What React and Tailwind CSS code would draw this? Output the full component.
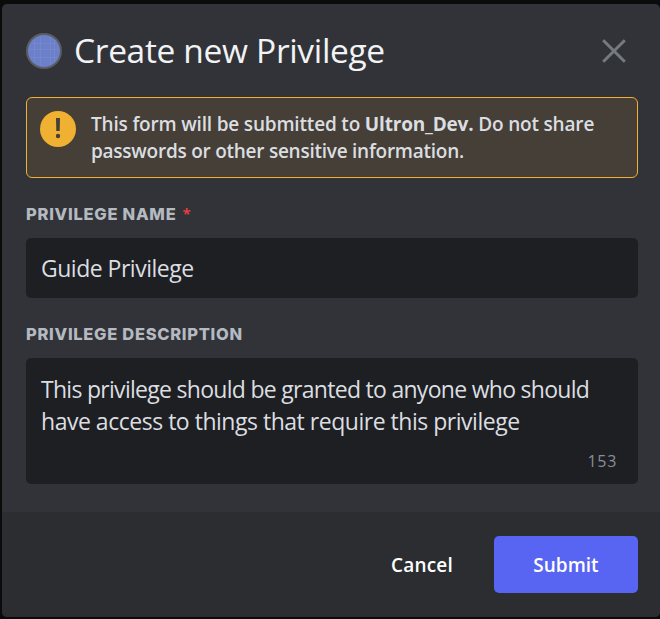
function Avatar() {
  return (
    <svg width="36" height="36" viewBox="0 0 36 36" className="shrink-0">
      <circle cx="18" cy="18" r="18" fill="#5b5d62" />
      <circle cx="18" cy="18" r="16" fill="#6b80c8" />
      <path
        d="M8.500 7v22M14.500 3v30M24.500 4v28M28.500 7v22M6 10.500h24M3 16.500h30M4 24.500h28"
        stroke="#7c8fd0"
        strokeWidth="1"
        strokeOpacity="0.5"
        fill="none"
      />
    </svg>
  );
}

function WarningIcon() {
  return (
    <svg width="36" height="36" viewBox="0 0 36 36" className="mt-px shrink-0">
      <circle cx="18" cy="18" r="18" fill="#f0b132" />
      <path d="M16 7h4l-0.300 13h-3.400z" fill="#453f37" />
      <circle cx="18" cy="25" r="2.200" fill="#453f37" />
    </svg>
  );
}

function Label({ children }) {
  return (
    <div className="flex h-5 whitespace-nowrap font-['Inter',sans-serif] text-[16.5px] font-extrabold leading-5 text-[#b5bac1]">
      {children}
    </div>
  );
}

export default function App() {
  return (
    <div className="h-[619px] w-[660px] overflow-hidden bg-[#0b0b0c] pl-[2px] pt-1 font-['Open_Sans',sans-serif]">
      <div className="flex h-[613px] flex-col overflow-hidden rounded-[5px] bg-[#313338]">
        <div className="flex flex-1 flex-col pl-6 pr-[22px]">
          <header className="flex h-[93px] items-start pt-[26px]">
            <div className="mt-[3px] flex">
              <Avatar />
            </div>
            <h1 className="ml-3 whitespace-nowrap text-[33.5px] leading-10 tracking-[-0.33px] text-[#f2f3f5]">
              Create new Privilege
            </h1>
            <button className="ml-auto mr-3 mt-[9px]" aria-label="Close">
              <svg width="24" height="24" viewBox="0 0 24 24" className="block">
                <path d="M1.200 1.200l21.600 21.600M22.800 1.200L1.200 22.800" stroke="#757980" strokeWidth="3" fill="none" />
              </svg>
            </button>
          </header>

          <div className="flex h-[81px] rounded-[6px] border border-[#f0b132] bg-[#453f37] pl-[13px] pt-3">
            <WarningIcon />
            <div className="ml-[15px] mt-px whitespace-nowrap text-[19px] font-semibold leading-[27px] text-[#dbdee1]">
              <div className="tracking-[-0.18px]">
                This form will be submitted to <strong className="font-bold">Ultron_Dev.</strong> Do not share
              </div>
              <div className="tracking-[-0.25px]">passwords or other sensitive information.</div>
            </div>
          </div>

          <div className="mt-[26px]">
            <Label>
              <span className="tracking-[0.73px]">PRIVILEGE NAME</span>
              <span className="ml-[6px] font-['Open_Sans',sans-serif] text-[15px] font-semibold leading-[18px] text-[#f23f42]">*</span>
            </Label>
          </div>
          <div className="mt-[14px] flex h-[60px] items-center whitespace-nowrap rounded-[5px] bg-[#1e1f22] pl-[15px] text-[23px] tracking-[-0.5px] text-[#dbdee1]">
            Guide Privilege
          </div>

          <div className="mt-[26px]">
            <Label>
              <span className="tracking-[0.7px]">PRIVILEGE DESCRIPTION</span>
            </Label>
          </div>
          <div className="mt-[14px] flex h-[126px] flex-col rounded-[5px] bg-[#1e1f22] pl-[15px] pr-[21px] pt-[15px] text-[#dbdee1]">
            <div className="whitespace-nowrap text-[23px] leading-8">
              <div className="tracking-[-0.71px]">This privilege should be granted to anyone who should</div>
              <div className="tracking-[-0.48px]">have access to things that require this privilege</div>
            </div>
            <div className="mt-[14px] text-right text-[16px] leading-5 tracking-[0.7px] text-[#878e98]">153</div>
          </div>
        </div>

        <footer className="flex h-[105px] items-center justify-end bg-[#2b2d31] pr-[22px] text-[19px] font-semibold text-white">
          <button className="mr-[41px] pt-[2px] tracking-[0.2px]">Cancel</button>
          <button className="h-[57px] w-[144px] rounded-[5px] bg-[#5865f2] pt-[2px] tracking-[0px]">Submit</button>
        </footer>
      </div>
    </div>
  );
}
